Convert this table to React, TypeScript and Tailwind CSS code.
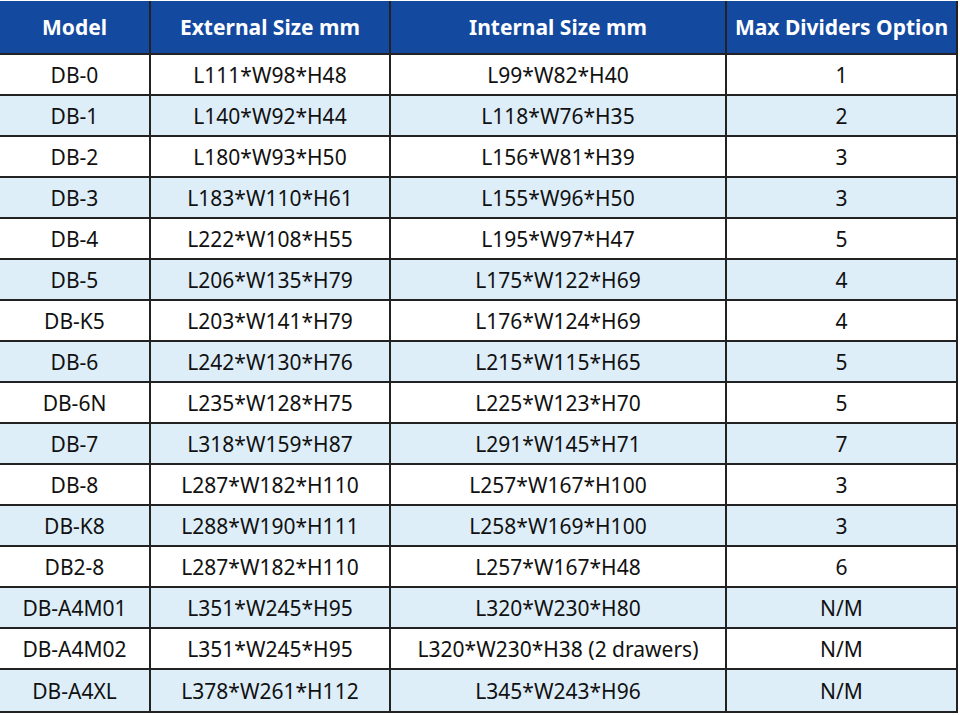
const rows: [string, string, string, string][] = [
  ["DB-0", "L111*W98*H48", "L99*W82*H40", "1"],
  ["DB-1", "L140*W92*H44", "L118*W76*H35", "2"],
  ["DB-2", "L180*W93*H50", "L156*W81*H39", "3"],
  ["DB-3", "L183*W110*H61", "L155*W96*H50", "3"],
  ["DB-4", "L222*W108*H55", "L195*W97*H47", "5"],
  ["DB-5", "L206*W135*H79", "L175*W122*H69", "4"],
  ["DB-K5", "L203*W141*H79", "L176*W124*H69", "4"],
  ["DB-6", "L242*W130*H76", "L215*W115*H65", "5"],
  ["DB-6N", "L235*W128*H75", "L225*W123*H70", "5"],
  ["DB-7", "L318*W159*H87", "L291*W145*H71", "7"],
  ["DB-8", "L287*W182*H110", "L257*W167*H100", "3"],
  ["DB-K8", "L288*W190*H111", "L258*W169*H100", "3"],
  ["DB2-8", "L287*W182*H110", "L257*W167*H48", "6"],
  ["DB-A4M01", "L351*W245*H95", "L320*W230*H80", "N/M"],
  ["DB-A4M02", "L351*W245*H95", "L320*W230*H38 (2 drawers)", "N/M"],
  ["DB-A4XL", "L378*W261*H112", "L345*W243*H96", "N/M"],
];

const headers = ["Model", "External Size mm", "Internal Size mm", "Max Dividers Option"];

export default function App() {
  return (
    <div className="w-[960px] h-[715px] bg-white pt-px" style={{ fontFamily: '"Noto Sans", "Open Sans", sans-serif' }}>
      <div className="w-[958px] border-b-2 border-[#222]">
        {/* Header */}
        <div className="grid grid-cols-[151px_240px_336px_231px] h-[54px] bg-[#1449a0] border-b-2 border-[#222]">
          {headers.map((h) => (
            <div
              key={h}
              className="flex items-center justify-center pt-0.5 border-r-2 border-[#222] text-white font-bold text-[21px]"
            >
              {h}
            </div>
          ))}
        </div>

        {/* Body */}
        {rows.map((r, i) => (
          <div
            key={r[0]}
            className={`grid grid-cols-[151px_240px_336px_231px] h-[41px] ${
              i === rows.length - 1 ? "" : "border-b-2 border-[#222]"
            } ${i % 2 === 1 ? "bg-[#deeef9]" : "bg-white"}`}
          >
            {r.map((c, j) => (
              <div
                key={j}
                className="flex items-center justify-center pt-0.5 border-r-2 border-[#222] text-[#111] text-[21px]"
              >
                {c}
              </div>
            ))}
          </div>
        ))}
      </div>
    </div>
  );
}
